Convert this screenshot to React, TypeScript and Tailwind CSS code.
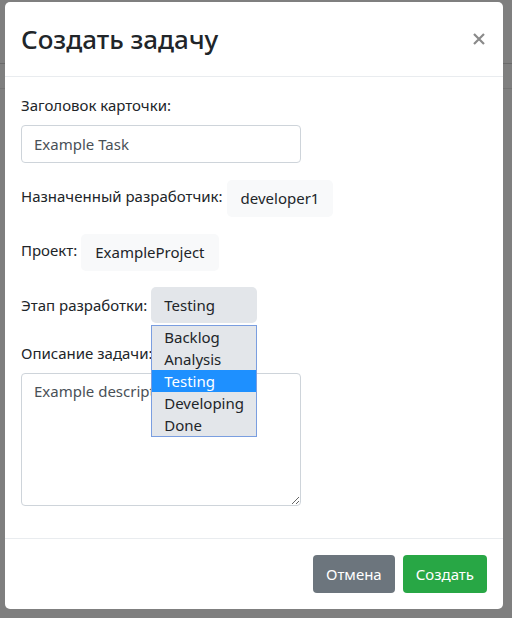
import React from "react";

const STAGES = ["Backlog", "Analysis", "Testing", "Developing", "Done"];

function ReadOnlyBox({ children }: { children: React.ReactNode }) {
  return (
    <span className="inline-flex h-[37px] items-center rounded-[5px] bg-[#f8f9fa] px-[14px] text-[#212529]">
      {children}
    </span>
  );
}

export default function App() {
  const current = "Testing";

  return (
    <div
      className="relative h-[618px] w-[512px] overflow-hidden bg-[#7f7f7f] pl-[5px] pt-[2px]"
      style={{ fontFamily: '"Noto Sans", "Open Sans", sans-serif' }}
    >
      {/* page behind the overlay */}
      <div className="absolute left-0 right-0 top-[63px] h-px bg-[#6a6a6a]" />
      <div className="absolute left-0 right-0 top-[88px] h-px bg-[#747474]" />

      <div className="relative w-[498px] rounded-[5px] bg-white text-[#212529]">
        {/* header */}
        <div className="flex h-[75px] items-center justify-between border-b border-[#e9ecef] pl-4 pr-[18px]">
          <h2 className="text-[26px] font-medium leading-[42px]">Создать задачу</h2>
          <button className="p-0">
            <svg width="12" height="12" viewBox="0 0 12 12" className="text-[#8a8a8a]">
              <path d="M1 1L11 11M11 1L1 11" stroke="currentColor" strokeWidth="2.2" />
            </svg>
          </button>
        </div>

        {/* body */}
        <div className="border-b border-[#e9ecef] p-4 text-[15px]">
          <div className="mb-4">
            <label className="mb-2 block leading-6">Заголовок карточки:</label>
            <input
              type="text"
              defaultValue="Example Task"
              className="h-[38px] w-[280px] rounded-[4px] border border-[#ced4da] px-3 text-[15px] text-[#495057] outline-none"
            />
          </div>

          <div className="mb-4 flex h-[38px] items-center gap-1">
            <span className="-mt-[3px]">Назначенный разработчик:</span>
            <ReadOnlyBox>developer1</ReadOnlyBox>
          </div>

          <div className="mb-4 flex h-[38px] items-center gap-1">
            <span className="-mt-[3px]">Проект:</span>
            <ReadOnlyBox>ExampleProject</ReadOnlyBox>
          </div>

          <div className="relative z-10 mb-4 flex h-[38px] items-start gap-1">
            <span className="mt-[7px]">Этап разработки:</span>
            <div className="relative">
              <div className="flex h-[36px] w-[106px] items-center rounded-[5px] bg-[#e3e6ea] px-[13px]">
                {current}
              </div>
              <ul className="absolute left-0 top-[38px] w-[106px] border border-[#7a9ee0] bg-[#e3e6ea]">
                {STAGES.map((s) => (
                  <li
                    key={s}
                    className={
                      s === current
                        ? "h-[22px] bg-[#1e90ff] px-3 leading-[22px] text-white"
                        : "h-[22px] px-3 leading-[22px]"
                    }
                  >
                    {s}
                  </li>
                ))}
              </ul>
            </div>
          </div>

          <div className="mb-4">
            <label className="mb-2 block leading-6">Описание задачи:</label>
            <textarea
              defaultValue="Example description"
              className="block h-[133px] w-[280px] resize-y rounded-[4px] border border-[#ced4da] px-3 py-[6px] text-[15px] text-[#495057] outline-none"
            />
          </div>
        </div>

        {/* footer */}
        <div className="flex justify-end gap-2 p-4 text-[15px]">
          <button className="h-[38px] rounded-[4px] bg-[#6c757d] px-[13px] text-white">Отмена</button>
          <button className="h-[38px] rounded-[4px] bg-[#28a745] px-[13px] text-white">Создать</button>
        </div>
      </div>
    </div>
  );
}
